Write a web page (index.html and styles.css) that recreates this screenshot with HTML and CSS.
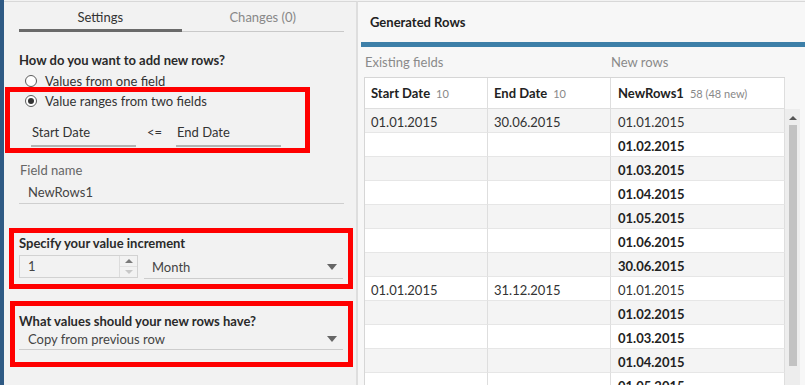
FILE: index.html
```html
<!DOCTYPE html>
<html>
<head>
<meta charset="utf-8">
<link rel="stylesheet" href="styles.css">
</head>
<body>
<div class="app">
  <div class="rail"></div>
  <aside class="settings">
    <div class="tabs">
      <div class="tab active">Settings</div>
      <div class="tab">Changes (0)</div>
    </div>
    <div class="section-title q1">How do you want to add new rows?</div>
    <div class="radio r1"><span class="dot"></span>Values from one field</div>
    <div class="mark mark1">
      <div class="radio r2"><span class="dot on"></span>Value ranges from two fields</div>
      <div class="range">
        <div class="pick">Start Date</div>
        <div class="op">&lt;=</div>
        <div class="pick">End Date</div>
      </div>
    </div>
    <div class="label">Field name</div>
    <div class="textfield">NewRows1</div>
    <div class="mark mark2">
      <div class="section-title">Specify your value increment</div>
      <div class="incr">
        <div class="num"><span class="val">1</span><span class="spin"><span class="up"></span><span class="down"></span></span></div>
        <div class="select month"><span>Month</span><span class="caret"></span></div>
      </div>
    </div>
    <div class="mark mark3">
      <div class="section-title">What values should your new rows have?</div>
      <div class="select wide"><span>Copy from previous row</span><span class="caret"></span></div>
    </div>
  </aside>
  <main class="preview">
    <div class="ptitle">Generated Rows</div>
    <div class="bluebar"></div>
    <div class="groups">
      <div class="g-existing">Existing fields</div>
      <div class="g-new">New rows</div>
    </div>
    <div class="tablewrap">
      <div class="grid">
        <div class="hc">Start Date<span class="cnt">10</span></div>
        <div class="hc">End Date<span class="cnt">10</span></div>
        <div class="hc c3">NewRows1<span class="cnt">58 (48 new)</span></div>

        <div class="dc odd">01.01.2015</div><div class="dc odd">30.06.2015</div><div class="dc odd c3">01.01.2015</div>
        <div class="dc"></div><div class="dc"></div><div class="dc c3 b">01.02.2015</div>
        <div class="dc odd"></div><div class="dc odd"></div><div class="dc odd c3 b">01.03.2015</div>
        <div class="dc"></div><div class="dc"></div><div class="dc c3 b">01.04.2015</div>
        <div class="dc odd"></div><div class="dc odd"></div><div class="dc odd c3 b">01.05.2015</div>
        <div class="dc"></div><div class="dc"></div><div class="dc c3 b">01.06.2015</div>
        <div class="dc odd"></div><div class="dc odd"></div><div class="dc odd c3 b">30.06.2015</div>
        <div class="dc">01.01.2015</div><div class="dc">31.12.2015</div><div class="dc c3">01.01.2015</div>
        <div class="dc odd"></div><div class="dc odd"></div><div class="dc odd c3 b">01.02.2015</div>
        <div class="dc"></div><div class="dc"></div><div class="dc c3 b">01.03.2015</div>
        <div class="dc odd"></div><div class="dc odd"></div><div class="dc odd c3 b">01.04.2015</div>
        <div class="dc"></div><div class="dc"></div><div class="dc c3 b">01.05.2015</div>
      </div>
      <div class="scrollbar">
        <span class="sb-up"></span>
        <span class="sb-thumb"></span>
      </div>
    </div>
  </main>
</div>
</body>
</html>
```

FILE: styles.css
```css
html, body {
  margin: 0;
  padding: 0;
  width: 805px;
  height: 385px;
  overflow: hidden;
  background: #f2f2f2;
  font-family: Lato, "Open Sans", sans-serif;
  font-size: 13px;
  color: #333;
}

.app {
  display: flex;
  height: 385px;
}

.rail {
  width: 4px;
  flex: none;
  background: #2f5a84;
}

.settings {
  width: 354px;
  flex: none;
  box-sizing: border-box;
  margin-top: 1px;
  border-top: 1px solid #d8d8d8;
  border-right: 2px solid #dedede;
  padding: 0 12px 0 15px;
  background: #f2f2f2;
}

.tabs {
  display: flex;
  height: 30px;
  box-sizing: border-box;
  border-bottom: 1px solid #c9c9c9;
}

.tab {
  flex: 1;
  height: 30px;
  box-sizing: border-box;
  padding-top: 6px;
  line-height: 18px;
  text-align: center;
  color: #888;
}

.tab.active {
  color: #333;
  border-bottom: 3px solid #6a6a6a;
  margin-bottom: -1px;
}

.section-title {
  font-weight: 700;
  line-height: 18px;
  color: #2a2a2a;
}

.q1 { margin-top: 19px; }

.radio {
  display: flex;
  align-items: center;
  color: #333;
}

.r1 {
  height: 20px;
  margin-top: 2px;
  margin-left: 6px;
}

.r2 { height: 18px; }

.dot {
  width: 12px;
  height: 12px;
  box-sizing: border-box;
  border: 1px solid #5c5c5c;
  border-radius: 50%;
  background: #fff;
  margin-right: 8px;
  display: flex;
  align-items: center;
  justify-content: center;
}

.dot.on::after {
  content: "";
  width: 6px;
  height: 6px;
  border-radius: 50%;
  background: #333;
}

.mark {
  border: 5px solid #ff0000;
  box-sizing: border-box;
}

.mark1 {
  margin-top: -4px;
  margin-left: -14px;
  width: 305px;
  padding: 0 0 1px 15px;
}

.range {
  display: flex;
  margin-top: 13px;
  margin-left: 6px;
}

.pick {
  width: 105px;
  line-height: 18px;
  padding-bottom: 4px;
  border-bottom: 2px solid #b3b3b3;
  padding-left: 1px;
  box-sizing: border-box;
  color: #333;
}

.op {
  width: 40px;
  line-height: 18px;
  text-align: center;
  padding-right: 3px;
  box-sizing: border-box;
}

.label {
  margin-top: 8px;
  line-height: 18px;
  color: #666;
  padding-left: 1px;
}

.textfield {
  margin-top: 4px;
  line-height: 18px;
  padding: 0 0 2px 9px;
  border-bottom: 1px solid #cfcfcf;
  color: #444;
}

.mark2 {
  margin-top: 24px;
  margin-left: -10px;
  width: 344px;
  padding: 1px 0 5px 5px;
}

.incr {
  display: flex;
  margin-top: 3px;
}

.num {
  width: 119px;
  height: 23px;
  box-sizing: border-box;
  border: 1px solid #d2d2d2;
  display: flex;
  justify-content: space-between;
}

.val {
  padding-left: 8px;
  line-height: 21px;
  color: #444;
}

.spin {
  width: 17px;
  border-left: 1px solid #dcdcdc;
  display: flex;
  flex-direction: column;
}

.up, .down {
  flex: 1;
  display: flex;
  align-items: center;
  justify-content: center;
}

.up { border-bottom: 1px solid #e2e2e2; }

.up::after {
  content: "";
  border-left: 4px solid transparent;
  border-right: 4px solid transparent;
  border-bottom: 4px solid #7a7a7a;
}

.down::after {
  content: "";
  border-left: 4px solid transparent;
  border-right: 4px solid transparent;
  border-top: 4px solid #c8c8c8;
}

.select {
  display: flex;
  justify-content: space-between;
  align-items: center;
  box-sizing: border-box;
  border-bottom: 1px solid #cdcdcd;
  color: #444;
}

.month {
  width: 199px;
  height: 24px;
  margin-left: 6px;
  padding: 0 6px 0 8px;
}

.caret {
  width: 0;
  height: 0;
  border-left: 5px solid transparent;
  border-right: 5px solid transparent;
  border-top: 6px solid #666;
}

.mark3 {
  margin-top: 12px;
  margin-left: -9px;
  width: 343px;
  padding: 6px 0 12px 4px;
}

.wide {
  width: 324px;
  line-height: 18px;
  padding: 0 6px 1px 9px;
}

/* right side */

.preview {
  flex: 1;
  margin-top: 1px;
  border-top: 1px solid #d8d8d8;
  background: #f7f7f7;
  overflow: hidden;
}

.ptitle {
  height: 40px;
  line-height: 40px;
  padding-left: 12px;
  font-weight: 700;
  color: #222;
}

.bluebar {
  height: 5px;
  margin-left: 3px;
  background: #3d7fa8;
}

.groups {
  display: grid;
  grid-template-columns: 246px 174px;
  margin: 6px 0 0 7px;
  line-height: 18px;
  color: #8a8a8a;
}

.tablewrap {
  display: flex;
  align-items: flex-start;
  margin-top: 6px;
  margin-left: 6px;
}

.grid {
  display: grid;
  grid-template-columns: 123px 123px 174px;
  grid-auto-rows: min-content;
  border-left: 1px solid #d6d6d6;
  border-top: 1px solid #d6d6d6;
}

.hc, .dc {
  box-sizing: border-box;
  border-right: 1px solid #dedede;
  border-bottom: 1px solid #e6e6e6;
  padding-left: 6px;
  white-space: nowrap;
}

.hc {
  height: 31px;
  line-height: 30px;
  background: #fff;
  font-weight: 700;
  color: #222;
  border-bottom-color: #dedede;
}

.cnt {
  font-weight: 400;
  font-size: 11px;
  color: #888;
  margin-left: 6px;
}

.dc {
  height: 24px;
  line-height: 26px;
  background: #fff;
  color: #333;
}

.dc.odd { background: #f4f4f4; }

.c3 { padding-left: 7px; }

.b { font-weight: 700; color: #222; }

.scrollbar {
  width: 15px;
  margin-top: 32px;
  height: 300px;
  background: #ededed;
  position: relative;
}

.sb-up {
  position: absolute;
  left: 4px;
  top: 7px;
  border-left: 4px solid transparent;
  border-right: 4px solid transparent;
  border-bottom: 4px solid #555;
}

.sb-thumb {
  position: absolute;
  left: 4px;
  top: 16px;
  width: 8px;
  height: 241px;
  background: #c2c2c2;
}
```
